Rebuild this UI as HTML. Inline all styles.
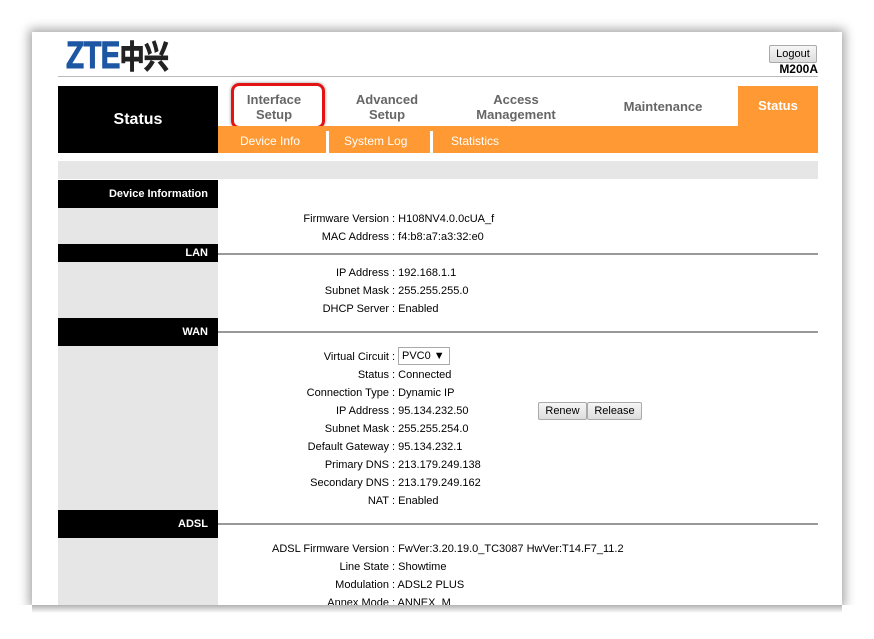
<!DOCTYPE html><html><head><style>
body{margin:0;width:874px;height:639px;background:#fff;position:relative;overflow:hidden;font-family:"Liberation Sans",Arial,sans-serif}
.a{position:absolute}
#f{left:32px;top:32px;width:810px;height:573px;background:#fff;box-shadow:0 0 10px 3px rgba(0,0,0,.35);overflow:hidden}
.n{color:#666;font-weight:bold;font-size:13px;text-align:center;line-height:15px}
.s{color:#fff;font-size:12px;top:134px}
.h{background:#000;color:#fff;font-weight:bold;font-size:11px;text-align:right;left:58px;width:150px;padding-right:10px}
.g{background:#e6e6e6;left:58px;width:160px}
.l{left:218px;width:600px;height:2px;background:#999}
.r{font-size:11px;color:#000;left:160px;width:500px;white-space:nowrap;margin-top:2px}
.r b{font-weight:normal;display:inline-block;width:229px;text-align:right}
.btn{border:1px solid #aaa;background:linear-gradient(#f6f6f6,#ddd);font-size:11px;height:16px;line-height:16px;text-align:center;border-radius:2px}
</style></head><body>
<div id="f" class="a"></div>
<div class="a" style="left:66px;top:32px;font-size:38px;font-weight:bold;color:#1d56a3;letter-spacing:-1px;font-family:'Liberation Sans','Noto Sans CJK SC',sans-serif;transform:scaleX(.78);transform-origin:left;-webkit-text-stroke:1px #1d56a3">ZTE<span style="color:#222;font-size:32px;-webkit-text-stroke:1px #222">中兴</span></div>
<div class="a btn" style="left:769px;top:45px;width:46px">Logout</div>
<div class="a" style="left:770px;top:62px;width:48px;text-align:right;font-weight:bold;font-size:12px">M200A</div>
<div class="a" style="left:58px;top:76px;width:760px;height:1px;background:#bbb"></div>
<div class="a" style="left:58px;top:86px;width:160px;height:67px;background:#000"></div>
<div class="a" style="left:58px;top:111px;width:160px;text-align:center;color:#fff;font-weight:bold;font-size:16px">Status</div>
<div class="a n" style="left:228px;top:92px;width:92px">Interface<br>Setup</div>
<div class="a" style="left:231px;top:83px;width:88px;height:40px;border:3px solid #e31313;border-radius:8px;box-shadow:0 0 3px rgba(0,0,0,.4)"></div>
<div class="a n" style="left:340px;top:92px;width:94px">Advanced<br>Setup</div>
<div class="a n" style="left:466px;top:92px;width:100px">Access<br>Management</div>
<div class="a n" style="left:610px;top:99px;width:106px">Maintenance</div>
<div class="a" style="left:738px;top:86px;width:80px;height:40px;background:#f93"></div>
<div class="a" style="left:738px;top:98px;width:80px;text-align:center;color:#fff;font-weight:bold;font-size:13px">Status</div>
<div class="a" style="left:218px;top:126px;width:600px;height:27px;background:#f93"></div>
<div class="a" style="left:326px;top:131px;width:3px;height:22px;background:#fff"></div>
<div class="a" style="left:430px;top:131px;width:3px;height:22px;background:#fff"></div>
<div class="a s" style="left:240px">Device Info</div>
<div class="a s" style="left:344px">System Log</div>
<div class="a s" style="left:451px">Statistics</div>
<div class="a" style="left:58px;top:161px;width:760px;height:18px;background:#e6e6e6"></div>
<div class="a h" style="top:180px;height:28px;line-height:28px">Device Information</div>
<div class="a g" style="top:208px;height:36px"></div>
<div class="a h" style="top:244px;height:18px;line-height:18px">LAN</div><div class="a l" style="top:253px"></div>
<div class="a g" style="top:262px;height:56px"></div>
<div class="a h" style="top:318px;height:28px;line-height:28px">WAN</div><div class="a l" style="top:331px"></div>
<div class="a g" style="top:346px;height:164px"></div>
<div class="a h" style="top:510px;height:28px;line-height:28px">ADSL</div><div class="a l" style="top:523px"></div>
<div class="a g" style="top:538px;height:67px"></div>
<div class="a r" style="top:211px"><b>Firmware Version</b> : H108NV4.0.0cUA_f</div>
<div class="a r" style="top:229px"><b>MAC Address</b> : f4:b8:a7:a3:32:e0</div>
<div class="a r" style="top:265px"><b>IP Address</b> : 192.168.1.1</div>
<div class="a r" style="top:283px"><b>Subnet Mask</b> : 255.255.255.0</div>
<div class="a r" style="top:301px"><b>DHCP Server</b> : Enabled</div>
<div class="a r" style="top:349px"><b>Virtual Circuit</b> : </div>
<div class="a" style="left:398px;top:347px;width:52px;border:1px solid #aaa;font-size:11px;line-height:16px;padding-left:3px;box-sizing:border-box;height:18px">PVC0 ▼</div>
<div class="a r" style="top:367px"><b>Status</b> : Connected</div>
<div class="a r" style="top:385px"><b>Connection Type</b> : Dynamic IP</div>
<div class="a r" style="top:403px"><b>IP Address</b> : 95.134.232.50</div>
<div class="a btn" style="left:538px;top:402px;width:47px">Renew</div>
<div class="a btn" style="left:587px;top:402px;width:53px">Release</div>
<div class="a r" style="top:421px"><b>Subnet Mask</b> : 255.255.254.0</div>
<div class="a r" style="top:439px"><b>Default Gateway</b> : 95.134.232.1</div>
<div class="a r" style="top:457px"><b>Primary DNS</b> : 213.179.249.138</div>
<div class="a r" style="top:475px"><b>Secondary DNS</b> : 213.179.249.162</div>
<div class="a r" style="top:493px"><b>NAT</b> : Enabled</div>
<div class="a r" style="top:541px"><b>ADSL Firmware Version</b> : FwVer:3.20.19.0_TC3087 HwVer:T14.F7_11.2</div>
<div class="a r" style="top:559px"><b>Line State</b> : Showtime</div>
<div class="a r" style="top:577px"><b>Modulation</b> : ADSL2 PLUS</div>
<div class="a" style="left:0;top:605px;width:874px;height:34px;background:#fff"></div>
<div class="a r" style="top:595px;height:8px;overflow:hidden"><b>Annex Mode</b> : ANNEX_M</div>
<div class="a" style="left:32px;top:605px;width:810px;height:8px;background:linear-gradient(rgba(0,0,0,.3),rgba(0,0,0,0))"></div>
</body></html>
